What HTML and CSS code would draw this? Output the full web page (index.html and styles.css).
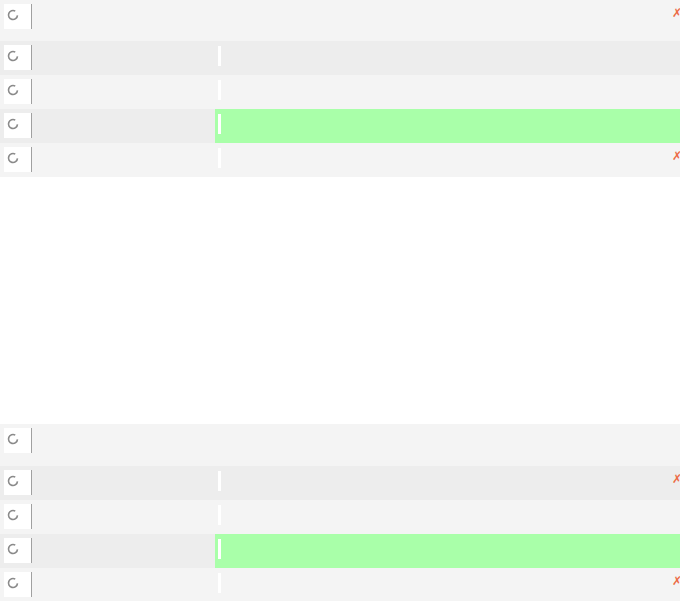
FILE: index.html
```html
<!DOCTYPE html>
<html>
<head>
<meta charset="utf-8">
<link rel="stylesheet" href="styles.css">
</head>
<body>
<div class="page">
  <div class="group">
    <div class="row odd first">
      <div class="check"><svg class="spin" viewBox="0 0 12 12"><path d="M8.25 2.1 A4.5 4.5 0 1 0 10.48 6.39" /></svg></div>
      <div class="main"><span></span><span class="x">✗</span></div>
    </div>
    <div class="row even">
      <div class="check"><svg class="spin" viewBox="0 0 12 12"><path d="M8.25 2.1 A4.5 4.5 0 1 0 10.48 6.39" /></svg></div>
      <div class="main"><span class="bar"></span></div>
    </div>
    <div class="row odd">
      <div class="check"><svg class="spin" viewBox="0 0 12 12"><path d="M8.25 2.1 A4.5 4.5 0 1 0 10.48 6.39" /></svg></div>
      <div class="main"><span class="bar"></span></div>
    </div>
    <div class="row even">
      <div class="check"><svg class="spin" viewBox="0 0 12 12"><path d="M8.25 2.1 A4.5 4.5 0 1 0 10.48 6.39" /></svg></div>
      <div class="main green"><span class="bar"></span></div>
    </div>
    <div class="row odd">
      <div class="check"><svg class="spin" viewBox="0 0 12 12"><path d="M8.25 2.1 A4.5 4.5 0 1 0 10.48 6.39" /></svg></div>
      <div class="main"><span class="bar"></span><span class="x">✗</span></div>
    </div>
  </div>
  <div class="group second">
    <div class="row odd first">
      <div class="check"><svg class="spin" viewBox="0 0 12 12"><path d="M8.25 2.1 A4.5 4.5 0 1 0 10.48 6.39" /></svg></div>
      <div class="main"><span></span></div>
    </div>
    <div class="row even">
      <div class="check"><svg class="spin" viewBox="0 0 12 12"><path d="M8.25 2.1 A4.5 4.5 0 1 0 10.48 6.39" /></svg></div>
      <div class="main"><span class="bar"></span><span class="x">✗</span></div>
    </div>
    <div class="row odd">
      <div class="check"><svg class="spin" viewBox="0 0 12 12"><path d="M8.25 2.1 A4.5 4.5 0 1 0 10.48 6.39" /></svg></div>
      <div class="main"><span class="bar"></span></div>
    </div>
    <div class="row even">
      <div class="check"><svg class="spin" viewBox="0 0 12 12"><path d="M8.25 2.1 A4.5 4.5 0 1 0 10.48 6.39" /></svg></div>
      <div class="main green"><span class="bar"></span></div>
    </div>
    <div class="row odd">
      <div class="check"><svg class="spin" viewBox="0 0 12 12"><path d="M8.25 2.1 A4.5 4.5 0 1 0 10.48 6.39" /></svg></div>
      <div class="main"><span class="bar"></span><span class="x">✗</span></div>
    </div>
  </div>
</div>
</body>
</html>
```
FILE: styles.css
```css
html, body {
  margin: 0;
  padding: 0;
  background: #ffffff;
  overflow: hidden;
  font-family: "DejaVu Sans", "Liberation Sans", sans-serif;
}
.page {
  width: 680px;
  height: 601px;
  overflow: hidden;
  display: flex;
  flex-direction: column;
}
.group {
  display: flex;
  flex-direction: column;
}
.group.second {
  margin-top: 247px;
}
.row {
  display: flex;
  height: 34px;
  flex: none;
}
.row.first {
  height: 41px;
}
.group.second .row.first {
  height: 42px;
}
.row.odd { background: #f4f4f4; }
.row.even { background: #ededed; }
.check {
  width: 27px;
  height: 25px;
  margin: 4px 0 0 4px;
  background: #ffffff;
  border-right: 1px solid #a0a0a0;
  flex: none;
  display: flex;
  align-items: flex-start;
}
.spin {
  width: 12px;
  height: 12px;
  margin: 5px 0 0 3px;
  fill: none;
  stroke: #8a8a8a;
  stroke-width: 1.6;
}
.main {
  margin-left: 183px;
  flex: 1;
  display: flex;
  justify-content: space-between;
  align-items: flex-start;
  height: 34px;
}
.main.green {
  background: #a9ffa9;
}
.bar {
  width: 3px;
  height: 20px;
  margin: 5px 0 0 3px;
  background: #ffffff;
}
.x {
  color: #ec6a44;
  font-size: 12px;
  line-height: 12px;
  margin: 7px -2px 0 0;
}
```
